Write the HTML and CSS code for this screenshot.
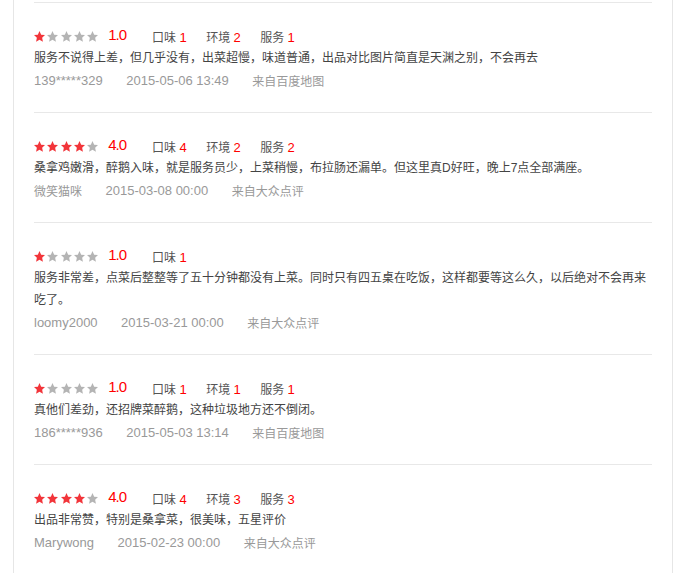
FILE: index.html
```html
<!DOCTYPE html>
<html lang="zh-CN">
<head>
  <meta charset="UTF-8" />
  <meta name="viewport" content="width=device-width, initial-scale=1.0"/>
  <title>评论列表</title>
  <link rel="stylesheet" href="styles.css">
</head>

<body>

  <svg class="defs" width="0" height="0">
    <symbol id="star" viewBox="0 0 10 10">
      <polygon points="5,0 6.5,3.3 10,3.7 7.4,6.1 8.1,9.8 5,8 1.9,9.8 2.6,6.1 0,3.7 3.5,3.3"/>
    </symbol>
  </svg>

  <div class="wrap">
    <ul class="review-list">

      <!-- 1 -->
      <li class="review">
        <div class="rating">
          <span class="stars">
            <svg class="on"><use href="#star"/></svg><svg><use href="#star"/></svg><svg><use href="#star"/></svg><svg><use href="#star"/></svg><svg><use href="#star"/></svg>
          </span>
          <span class="score">1.0</span>
          <span class="sub">口味 <em>1</em></span>
          <span class="sub">环境 <em>2</em></span>
          <span class="sub">服务 <em>1</em></span>
        </div>
        <p class="text">服务不说得上差，但几乎没有，出菜超慢，味道普通，出品对比图片简直是天渊之别，不会再去</p>
        <div class="meta">
          <span class="user">139*****329</span>
          <span class="time">2015-05-06 13:49</span>
          <span class="from">来自百度地图</span>
        </div>
      </li>

      <!-- 2 -->
      <li class="review">
        <div class="rating">
          <span class="stars">
            <svg class="on"><use href="#star"/></svg><svg class="on"><use href="#star"/></svg><svg class="on"><use href="#star"/></svg><svg class="on"><use href="#star"/></svg><svg><use href="#star"/></svg>
          </span>
          <span class="score">4.0</span>
          <span class="sub">口味 <em>4</em></span>
          <span class="sub">环境 <em>2</em></span>
          <span class="sub">服务 <em>2</em></span>
        </div>
        <p class="text">桑拿鸡嫩滑，醉鹅入味，就是服务员少，上菜稍慢，布拉肠还漏单。但这里真D好旺，晚上7点全部满座。</p>
        <div class="meta">
          <span class="user cn">微笑猫咪</span>
          <span class="time">2015-03-08 00:00</span>
          <span class="from">来自大众点评</span>
        </div>
      </li>

      <!-- 3 -->
      <li class="review">
        <div class="rating">
          <span class="stars">
            <svg class="on"><use href="#star"/></svg><svg><use href="#star"/></svg><svg><use href="#star"/></svg><svg><use href="#star"/></svg><svg><use href="#star"/></svg>
          </span>
          <span class="score">1.0</span>
          <span class="sub">口味 <em>1</em></span>
        </div>
        <p class="text">服务非常差，点菜后整整等了五十分钟都没有上菜。同时只有四五桌在吃饭，这样都要等这么久，以后绝对不会再来吃了。</p>
        <div class="meta">
          <span class="user">loomy2000</span>
          <span class="time">2015-03-21 00:00</span>
          <span class="from">来自大众点评</span>
        </div>
      </li>

      <!-- 4 -->
      <li class="review">
        <div class="rating">
          <span class="stars">
            <svg class="on"><use href="#star"/></svg><svg><use href="#star"/></svg><svg><use href="#star"/></svg><svg><use href="#star"/></svg><svg><use href="#star"/></svg>
          </span>
          <span class="score">1.0</span>
          <span class="sub">口味 <em>1</em></span>
          <span class="sub">环境 <em>1</em></span>
          <span class="sub">服务 <em>1</em></span>
        </div>
        <p class="text">真他们差劲，还招牌菜醉鹅，这种垃圾地方还不倒闭。</p>
        <div class="meta">
          <span class="user">186*****936</span>
          <span class="time">2015-05-03 13:14</span>
          <span class="from">来自百度地图</span>
        </div>
      </li>

      <!-- 5 -->
      <li class="review">
        <div class="rating">
          <span class="stars">
            <svg class="on"><use href="#star"/></svg><svg class="on"><use href="#star"/></svg><svg class="on"><use href="#star"/></svg><svg class="on"><use href="#star"/></svg><svg><use href="#star"/></svg>
          </span>
          <span class="score">4.0</span>
          <span class="sub">口味 <em>4</em></span>
          <span class="sub">环境 <em>3</em></span>
          <span class="sub">服务 <em>3</em></span>
        </div>
        <p class="text">出品非常赞，特别是桑拿菜，很美味，五星评价</p>
        <div class="meta">
          <span class="user">Marywong</span>
          <span class="time">2015-02-23 00:00</span>
          <span class="from">来自大众点评</span>
        </div>
      </li>

    </ul>
  </div>

</body>
</html>
```

FILE: styles.css
```css
body {
  margin: 0;
  font-family: "Liberation Sans", "Noto Sans CJK SC", sans-serif;
  background: #fff;
}

.defs {
  position: absolute;
  width: 0;
  height: 0;
}

.wrap {
  margin-left: 13px;
  width: 660px;
  min-height: 573px;
  box-sizing: border-box;
  border-left: 1px solid #e6e6e6;
  border-right: 1px solid #e6e6e6;
  padding: 2px 20px 0;
}

.review-list {
  list-style: none;
  margin: 0;
  padding: 0;
  border-top: 1px solid #e8e8e8;
}

.review {
  padding: 20px 0 21px;
  border-bottom: 1px solid #e8e8e8;
}

/* Rating row */
.rating {
  display: flex;
  align-items: center;
  height: 24px;
}

.stars {
  display: flex;
  gap: 2.3px;
  margin-top: 3px;
}

.stars svg {
  width: 11px;
  height: 11px;
  fill: #b4b4b4;
}

.stars svg.on {
  fill: #f2353a;
}

.score {
  margin-left: 10px;
  margin-right: 26px;
  font-size: 15px;
  letter-spacing: -1px;
  color: #f00;
  line-height: 24px;
}

.sub {
  margin-right: 19.5px;
  font-size: 12px;
  color: #555;
  margin-top: 3px;
  white-space: pre;
}

.sub em {
  font-style: normal;
  font-size: 13px;
  color: #f00;
}

/* Text */
.text {
  margin: 0;
  font-size: 12px;
  line-height: 22px;
  color: #444;
}

/* Meta */
.meta {
  display: flex;
  height: 22px;
  align-items: center;
  font-size: 13px;
  color: #999;
}

.meta span {
  margin-right: 23.5px;
}

.meta .cn,
.meta .from {
  font-size: 12px;
}
```
